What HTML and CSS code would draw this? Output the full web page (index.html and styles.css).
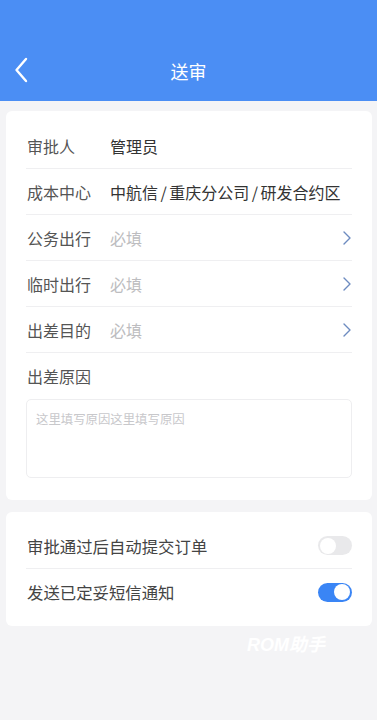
FILE: index.html
```html
<!DOCTYPE html>
<html lang="zh">
<head>
<meta charset="utf-8">
<link rel="stylesheet" href="styles.css">
</head>
<body>
<header class="topbar">
  <svg class="back" width="14" height="26" viewBox="0 0 14 26"><path d="M12 2 L2.5 13 L12 24" fill="none" stroke="#fff" stroke-width="2.4" stroke-linecap="round" stroke-linejoin="round"/></svg>
  <h1 class="title">送审</h1>
</header>
<main class="content">
  <section class="card form">
    <div class="row line"><span class="label">审批人</span><span class="value">管理员</span></div>
    <div class="row line"><span class="label">成本中心</span><span class="value">中航信<span class="sep">/</span>重庆分公司<span class="sep">/</span>研发合约区</span></div>
    <div class="row line"><span class="label">公务出行</span><span class="placeholder">必填</span><svg class="chev" width="10" height="16" viewBox="0 0 10 16"><path d="M2 2 L8 8 L2 14" fill="none" stroke="#6d8bc0" stroke-width="1.4" stroke-linecap="round" stroke-linejoin="round"/></svg></div>
    <div class="row line"><span class="label">临时出行</span><span class="placeholder">必填</span><svg class="chev" width="10" height="16" viewBox="0 0 10 16"><path d="M2 2 L8 8 L2 14" fill="none" stroke="#6d8bc0" stroke-width="1.4" stroke-linecap="round" stroke-linejoin="round"/></svg></div>
    <div class="row line"><span class="label">出差目的</span><span class="placeholder">必填</span><svg class="chev" width="10" height="16" viewBox="0 0 10 16"><path d="M2 2 L8 8 L2 14" fill="none" stroke="#6d8bc0" stroke-width="1.4" stroke-linecap="round" stroke-linejoin="round"/></svg></div>
    <div class="row"><span class="label">出差原因</span></div>
    <div class="textarea">这里填写原因这里填写原因</div>
  </section>
  <section class="card switches">
    <div class="row line"><span class="label wide">审批通过后自动提交订单</span><span class="toggle"><span class="knob"></span></span></div>
    <div class="row"><span class="label wide">发送已定妥短信通知</span><span class="toggle on"><span class="knob"></span></span></div>
  </section>
  <div class="watermark">ROM助手</div>
</main>
</body>
</html>
```

FILE: styles.css
```css
* { box-sizing: border-box; }
html, body { margin: 0; padding: 0; }
body {
  width: 377px;
  height: 720px;
  background: #f4f4f6;
  font-family: "Noto Sans CJK SC", "Noto Sans", sans-serif;
  overflow: hidden;
}
.topbar {
  height: 101px;
  background: #4b8ef4;
  display: flex;
  align-items: flex-end;
  justify-content: center;
  position: relative;
  padding-bottom: 17px;
}
.back {
  position: absolute;
  left: 14px;
  top: 57px;
}
.title {
  margin: 0;
  font-size: 18px;
  font-weight: normal;
  color: #fff;
  line-height: 26px;
}
.content {
  padding: 10px 5px 0 6px;
  display: flex;
  flex-direction: column;
}
.card {
  background: #fff;
  border-radius: 6px;
  padding: 12px 20px 22px 20px;
}
.switches {
  margin-top: 12px;
  padding: 11px 20px 11px 20px;
}
.row {
  height: 46px;
  display: flex;
  align-items: center;
  font-size: 16px;
}
.line { border-bottom: 1px solid #efeff1; }
.label {
  width: 84px;
  padding-left: 1px;
  color: #555;
  flex: none;
}
.label.wide { width: auto; flex: 1; color: #444; font-size: 16.4px; }
.value { color: #333; flex: 1; white-space: nowrap; }
.sep { padding: 0 2.5px; }
.placeholder { color: #bdbdc0; flex: 1; }
.chev { flex: none; margin-right: 0; }
.textarea {
  height: 79px;
  border: 1px solid #eeeef0;
  border-radius: 5px;
  padding: 10px 9px;
  font-size: 12.4px;
  line-height: 18px;
  color: #c8c8cb;
}
.toggle {
  width: 34px;
  height: 19px;
  border-radius: 10px;
  background: #e9e9eb;
  position: relative;
  flex: none;
}
.toggle .knob {
  position: absolute;
  top: 1.5px;
  left: 2px;
  width: 16px;
  height: 16px;
  border-radius: 50%;
  background: #fff;
}
.toggle.on { background: #3a85f5; }
.toggle.on .knob { left: 16px; }
.watermark {
  margin: 8px 0 0 241px;
  font-family: "Liberation Sans", "Noto Sans CJK SC", sans-serif;
  font-size: 18px;
  font-weight: bold;
  font-style: italic;
  color: #ffffff;
  line-height: 22px;
}
```
